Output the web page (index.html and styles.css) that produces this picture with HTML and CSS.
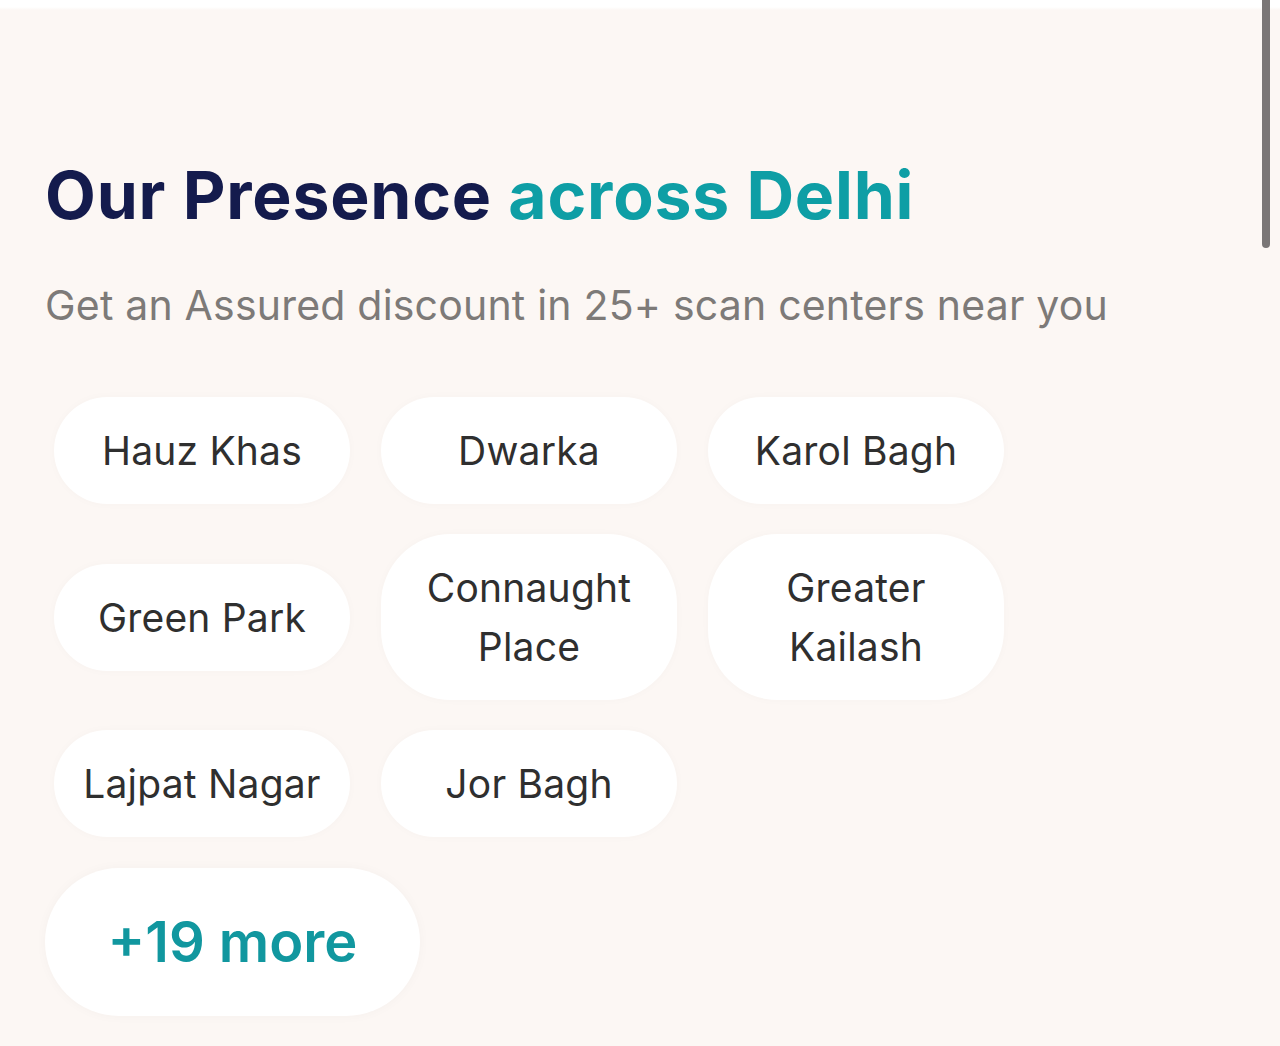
FILE: index.html
```html
<!DOCTYPE html>
<html lang="en">
<head>
<meta charset="utf-8">
<title>Our Presence across Delhi</title>
<link rel="stylesheet" href="styles.css">
</head>
<body>
<div class="topbar"></div>
<main class="section">
  <h1 class="title">Our Presence <span class="accent">across Delhi</span></h1>
  <p class="subtitle">Get an Assured discount in 25+ scan centers near you</p>
  <div class="chips">
    <div class="chip">Hauz Khas</div>
    <div class="chip">Dwarka</div>
    <div class="chip">Karol Bagh</div>
    <div class="chip">Green Park</div>
    <div class="chip">Connaught Place</div>
    <div class="chip">Greater Kailash</div>
    <div class="chip">Lajpat Nagar</div>
    <div class="chip">Jor Bagh</div>
  </div>
  <button class="more">+19 more</button>
</main>
<div class="scrollbar"></div>
</body>
</html>
```
FILE: styles.css
```css
html, body {
  margin: 0;
  padding: 0;
}
body {
  background: #fcf7f4;
  font-family: "Inter", "Noto Sans", sans-serif;
  height: 1046px;
  overflow: hidden;
  position: relative;
}
.topbar {
  height: 10px;
  background: linear-gradient(#ffffff 70%, #fcf7f4);
}
.section {
  padding: 140px 0 0 45px;
}
.title {
  margin: 0;
  font-size: 66px;
  line-height: 90px;
  font-weight: 700;
  color: #141b4d;
  letter-spacing: 0.8px;
}
.accent {
  color: #0e9ea5;
}
.subtitle {
  margin: 40px 0 0 0;
  font-size: 41px;
  line-height: 50px;
  color: #7d7a78;
  font-weight: 400;
  letter-spacing: 0.2px;
}
.chips {
  margin: 67px 0 0 9px;
  display: grid;
  grid-template-columns: repeat(3, 296px);
  column-gap: 31px;
  row-gap: 30px;
  align-items: center;
}
.chip {
  background: #ffffff;
  border-radius: 70px;
  padding: 24px 18px;
  min-height: 59px;
  display: flex;
  align-items: center;
  justify-content: center;
  text-align: center;
  font-size: 39px;
  line-height: 59px;
  letter-spacing: 0.2px;
  color: #2f2f2f;
  box-shadow: 0 0 10px rgba(0, 0, 0, 0.025);
}
.more {
  display: block;
  margin: 31px 0 0 0;
  width: 375px;
  height: 148px;
  border: none;
  border-radius: 74px;
  background: #ffffff;
  font-family: inherit;
  font-size: 56px;
  font-weight: 600;
  color: #11979f;
  box-shadow: 0 0 12px rgba(0, 0, 0, 0.03);
  cursor: pointer;
}
.scrollbar {
  position: absolute;
  top: 0;
  left: 1262px;
  width: 8px;
  height: 248px;
  background: #7a7676;
  border-radius: 0 0 4px 4px;
}
```
